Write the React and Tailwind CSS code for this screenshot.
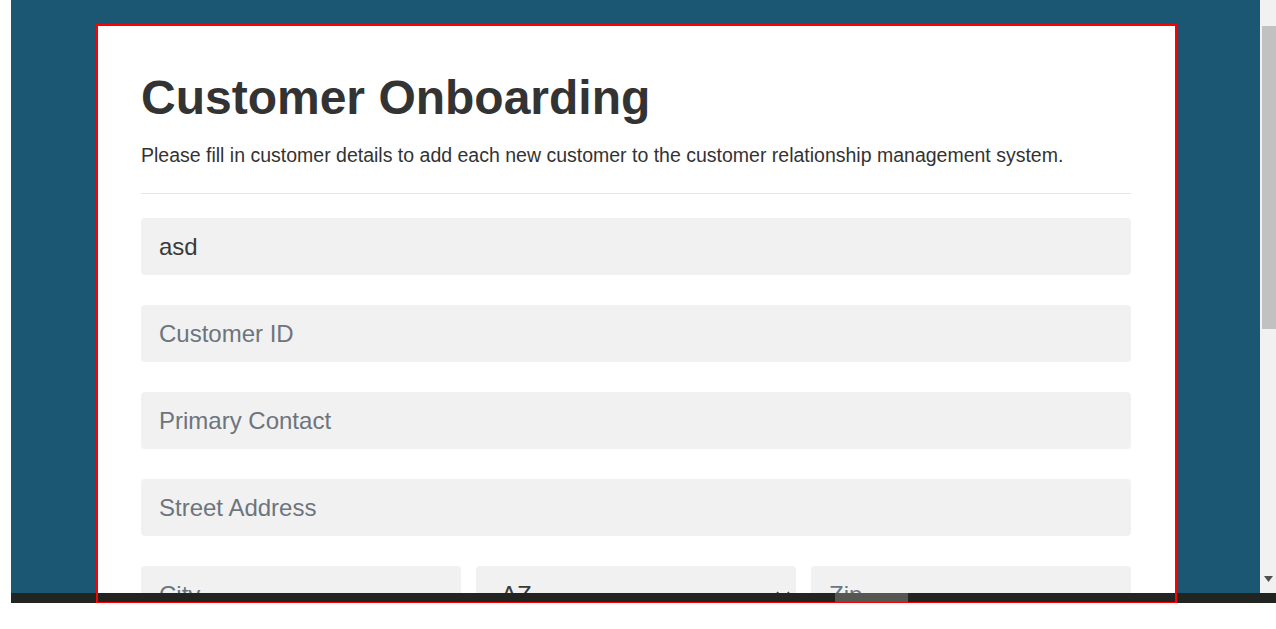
import React from "react";

const font = { fontFamily: '"Liberation Sans", Arial, Helvetica, sans-serif' };

function Field({ value, placeholder }) {
  return (
    <div className="h-[57px] rounded-[4px] bg-[#f1f1f1] flex items-center pl-[18px] pr-[18px]">
      {value ? (
        <span className="text-[24px] text-[#3a3a3a] leading-none">{value}</span>
      ) : (
        <span className="text-[24px] text-[#6c757d] leading-none">{placeholder}</span>
      )}
    </div>
  );
}

export default function App() {
  return (
    <div className="w-[1276px] h-[629px] bg-white" style={font}>
      <div className="ml-[11px] w-[1265px] h-[603px] relative overflow-hidden flex">
        <div className="w-[1249px] h-full bg-[#1b5673] pt-[24px] pl-[85px]">
          <div className="w-[1081px] h-[579px] bg-white border-2 border-[#ff0000] pl-[43px] pr-[44px] pt-[44px]">
            <h1 className="text-[48px] font-bold leading-[55px] text-[#333333]">
              Customer Onboarding
            </h1>
            <p className="mt-[19px] text-[19.5px] leading-[22px] text-[#333333]">
              Please fill in customer details to add each new customer to the customer relationship management system.
            </p>
            <div className="mt-[27px] border-t border-[#e6e6e6]" />
            <div className="mt-[24px] flex flex-col gap-[30px]">
              <Field value="asd" />
              <Field placeholder="Customer ID" />
              <Field placeholder="Primary Contact" />
              <Field placeholder="Street Address" />
              <div className="grid grid-cols-3 gap-[15px]">
                <Field placeholder="City" />
                <div className="h-[57px] rounded-[4px] bg-[#f1f1f1] flex items-center justify-between pl-[25px] pr-[6px]">
                  <span className="text-[24px] text-[#3a3a3a] leading-none">AZ</span>
                  <svg width="14" height="8" viewBox="0 0 14 8" fill="none">
                    <path d="M1 1l6 6 6-6" stroke="#444" strokeWidth="1.6" />
                  </svg>
                </div>
                <Field placeholder="Zip" />
              </div>
            </div>
          </div>
        </div>
        <div className="w-[16px] h-full bg-[#f1f1f1] relative">
          <div className="absolute top-[26px] left-[2px] w-[14px] h-[303px] bg-[#c1c1c1]" />
          <svg className="absolute left-[4px] top-[576px]" width="9" height="6" viewBox="0 0 9 6">
            <path d="M0 0h9L4.5 6z" fill="#505050" />
          </svg>
        </div>
        <div className="absolute left-0 right-0 bottom-0 h-[10px] bg-[#212421] z-10">
          <div className="absolute top-0 left-[824px] w-[73px] h-full bg-[#555752]" />
        </div>
        <div className="absolute left-[85px] top-[24px] w-[1081px] h-[579px] border-2 border-b border-[#ff0000] z-20 pointer-events-none" />
      </div>
    </div>
  );
}
